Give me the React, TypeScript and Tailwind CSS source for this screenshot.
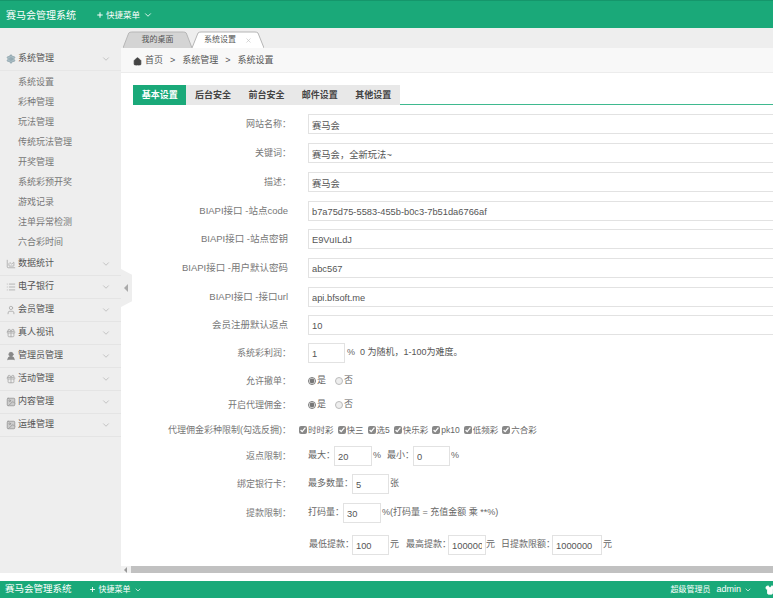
import { useState } from "react";
import { ChartArea, ChevronDown, Gift, Home, ImageIcon, List, Plus, Settings, Shirt, User, UserRound, X } from "lucide-react";

const SYSTEM_ITEMS = ["系统设置", "彩种管理", "玩法管理", "传统玩法管理", "开奖管理", "系统彩预开奖", "游戏记录", "注单异常检测", "六合彩时间"];

const MENU_GROUPS = [
  { label: "数据统计", icon: ChartArea, iconClass: "text-[#aaa]" },
  { label: "电子银行", icon: List, iconClass: "text-[#aaa]" },
  { label: "会员管理", icon: User, iconClass: "text-[#aaa]" },
  { label: "真人视讯", icon: Gift, iconClass: "text-[#aaa]" },
  { label: "管理员管理", icon: UserRound, iconClass: "fill-[#888] text-[#888]" },
  { label: "活动管理", icon: Gift, iconClass: "text-[#aaa]" },
  { label: "内容管理", icon: ImageIcon, iconClass: "fill-[#ccc] text-[#999]" },
  { label: "运维管理", icon: ImageIcon, iconClass: "fill-[#ccc] text-[#999]" },
];

const SUB_TABS = ["基本设置", "后台安全", "前台安全", "邮件设置", "其他设置"];
const LOTTERY_TYPES = ["时时彩", "快三", " 选5", "快乐彩", "pk10", "低频彩", "六合彩"];

function TextInput({ value, width }: { value: string; width: string }) {
  return (
    <input
      readOnly
      value={value}
      className={`h-[20px] shrink-0 border border-[#e2e2e2] bg-white px-[3px] pt-[1px] text-[9.3px] text-[#555] outline-none ${width}`}
    />
  );
}

// labels end 3px further right when they carry the full-width colon
function Row({ label, height, api, children }: { label: string; height: string; api?: boolean; children: React.ReactNode }) {
  return (
    <div className={`flex items-center ${height}`}>
      <label className={`shrink-0 text-right text-[#777] ${api ? "w-[155px] text-[9.5px]" : "w-[158px] pt-[2px] text-[9px]"}`}>{label}</label>
      <div className={`flex items-center whitespace-nowrap text-[9px] text-[#666] ${api ? "ml-[20px]" : "ml-[17px]"}`}>{children}</div>
    </div>
  );
}

function YesNo({ name }: { name: string }) {
  return (
    <div className="flex items-center">
      <input type="radio" name={name} readOnly checked className="h-[8px] w-[8px] accent-[#777]" />
      <span className="ml-[1px]">是</span>
      <span className="ml-[9px] h-[8px] w-[8px] rounded-full border border-[#bbb] bg-[#eee]" />
      <span className="ml-[1px]">否</span>
    </div>
  );
}

function PageTab({ label, active }: { label: string; active?: boolean }) {
  return (
    <div className={`relative flex h-[17px] items-center justify-center pt-[1px] text-[8px] text-[#555] ${active ? "w-[72px]" : "w-[69px]"}`}>
      <svg viewBox="0 0 72 17" preserveAspectRatio="none" className="absolute inset-0 h-full w-full">
        <path
          d="M0 17 L6 2 Q7 1 9 1 L63 1 Q65 1 66 2 L72 17"
          fill={active ? "#ffffff" : "#d4d4d4"}
          stroke="#b5b5b5"
          strokeWidth="1"
        />
      </svg>
      <span className="relative">{label}</span>
      {active && <X className="relative ml-[9px] h-[7px] w-[7px] text-[#bbb]" />}
    </div>
  );
}

export default function App() {
  const [subTab, setSubTab] = useState(0);

  return (
    <div className="flex h-[598px] w-[773px] flex-col overflow-hidden bg-white font-['Liberation_Sans','Noto_Sans_CJK_SC',sans-serif]">
      {/* Top bar */}
      <header className="flex h-[28px] shrink-0 items-center border-t border-[#15966b] bg-[#1aa979] pt-[1px] text-white">
        <span className="ml-[6px] text-[10px]">赛马会管理系统</span>
        <Plus className="ml-[20px] h-[8px] w-[8px]" strokeWidth={3} />
        <span className="ml-[2px] text-[8.5px]">快捷菜单</span>
        <ChevronDown className="ml-[3px] h-[10px] w-[10px]" />
      </header>

      <div className="relative flex h-[545px] shrink-0">
        {/* Sidebar */}
        <aside className="w-[121px] shrink-0 bg-[#eeeeee] pt-[20px]">
          <div className="flex h-[23px] items-center justify-between border-b border-[#e6e6e6] pl-[6px] pr-[10px] text-[9px] text-[#555]">
            <span className="flex items-center gap-[2px]">
              <Settings className="h-[10px] w-[10px] fill-[#a8bcc4] text-[#8aa0a8]" />
              系统管理
            </span>
            <ChevronDown className="h-[10px] w-[10px] text-[#bbb]" />
          </div>
          <ul className="pt-[2px]">
            {SYSTEM_ITEMS.map((item) => (
              <li key={item} className="flex h-[20px] items-center pl-[18px] text-[9px] text-[#777]">
                {item}
              </li>
            ))}
          </ul>
          <ul>
            {MENU_GROUPS.map(({ label, icon: Icon, iconClass }) => (
              <li key={label} className="flex h-[23px] items-center justify-between border-b border-[#e4e4e4] pl-[6px] pr-[10px] text-[9px] text-[#555]">
                <span className="flex items-center gap-[2px]">
                  <Icon className={`h-[10px] w-[10px] ${iconClass}`} />
                  {label}
                </span>
                <ChevronDown className="h-[10px] w-[10px] text-[#bbb]" />
              </li>
            ))}
          </ul>
        </aside>

        {/* Sidebar collapse handle */}
        <div className="absolute left-[121px] top-[241px] h-[38px] w-[11px] bg-[#eeeeee] [clip-path:polygon(0_0,100%_15%,100%_85%,0_100%)]">
          <div className="absolute left-[3px] top-[15px] h-0 w-0 border-y-[4px] border-r-[4px] border-y-transparent border-r-[#aaa]" />
        </div>

        <main className="flex min-w-0 flex-1 flex-col">
          <div className="flex h-[20px] shrink-0 items-end bg-[#eeeeee] pl-[2px]">
            <PageTab label="我的桌面" />
            <PageTab label="系统设置" active />
          </div>
          <div className="flex h-[25px] shrink-0 items-center gap-[6px] border-b border-[#ececec] bg-[#f8f8f8] pl-[12px] pt-[2px] text-[9px] text-[#555]">
            <Home className="-mr-[3px] h-[9px] w-[9px] fill-[#444] text-[#444]" />
            <span>首页</span>
            <span className="mx-[1px]">&gt;</span>
            <span>系统管理</span>
            <span className="mx-[1px]">&gt;</span>
            <span>系统设置</span>
          </div>

          <div className="min-h-0 flex-1 overflow-hidden pl-[12px] pt-[12px]">
            {/* Section tabs */}
            <div className="flex h-[20px] border-b border-[#3fb98f] text-[9px] font-bold">
              {SUB_TABS.map((tab, i) => (
                <button
                  key={tab}
                  onClick={() => setSubTab(i)}
                  className={`h-[20px] w-[53.4px] pt-[1px] ${subTab === i ? "bg-[#1aa979] text-white" : "bg-[#e8e8e8] text-[#444]"}`}
                >
                  {tab}
                </button>
              ))}
            </div>

            <form className="pt-[5px]">
              <Row label="网站名称：" height="h-[28px]"><TextInput value="赛马会" width="w-[480px]" /></Row>
              <Row label="关键词：" height="h-[30px]"><TextInput value="赛马会，全新玩法~" width="w-[480px]" /></Row>
              <Row label="描述：" height="h-[28px]"><TextInput value="赛马会" width="w-[480px]" /></Row>
              <Row api label="BIAPI接口 -站点code" height="h-[30px]"><TextInput value="b7a75d75-5583-455b-b0c3-7b51da6766af" width="w-[480px]" /></Row>
              <Row api label="BIAPI接口 -站点密钥" height="h-[26px]"><TextInput value="E9VuILdJ" width="w-[480px]" /></Row>
              <Row api label="BIAPI接口 -用户默认密码" height="h-[32px]"><TextInput value="abc567" width="w-[480px]" /></Row>
              <Row api label="BIAPI接口 -接口url" height="h-[26px]"><TextInput value="api.bfsoft.me" width="w-[480px]" /></Row>
              <Row api label="会员注册默认返点" height="h-[30px]"><TextInput value="10" width="w-[480px]" /></Row>
              <Row label="系统彩利润：" height="h-[26px]">
                <TextInput value="1" width="w-[37px]" />
                <span className="ml-[2px]">%</span>
                <span className="ml-[5px] text-[#555]">0 为随机，1-100为难度。</span>
              </Row>
              <Row label="允许撤单：" height="h-[30px]"><YesNo name="allowCancel" /></Row>
              <Row label="开启代理佣金：" height="h-[18px]"><YesNo name="agentCommission" /></Row>
              <Row label="代理佣金彩种限制(勾选反拥)：" height="h-[32px]">
                <div className="-ml-[9px] flex items-center gap-[4px] text-[8.5px]">
                  {LOTTERY_TYPES.map((name) => (
                    <span key={name} className="flex items-center">
                      <input type="checkbox" readOnly checked className="mr-[1px] h-[8px] w-[8px] accent-[#888]" />
                      {name}
                    </span>
                  ))}
                </div>
              </Row>
              <Row label="返点限制：" height="h-[20px]">
                <span>最大：</span>
                <TextInput value="20" width="-ml-[1px] w-[38px]" />
                <span className="ml-[1px] mr-[6px]">%</span>
                <span>最小：</span>
                <TextInput value="0" width="-ml-[1px] w-[37px]" />
                <span className="ml-[1px]">%</span>
              </Row>
              <Row label="绑定银行卡：" height="h-[36px]">
                <span>最多数量：</span>
                <TextInput value="5" width="-ml-[1px] w-[37px]" />
                <span className="ml-[1px]">张</span>
              </Row>
              <Row label="提款限制：" height="h-[22px]">
                <span>打码量：</span>
                <TextInput value="30" width="-ml-[1px] w-[38px]" />
                <span className="ml-[1px]">%(打码量 = 充值金额 乘 **%)</span>
              </Row>
              <div className="flex h-[42px] items-center whitespace-nowrap pl-[176px] text-[9px] text-[#666]">
                <span>最低提款：</span>
                <TextInput value="100" width="-ml-[2px] w-[37px]" />
                <span className="ml-[1px] mr-[7px]">元</span>
                <span>最高提款：</span>
                <TextInput value="1000000" width="-ml-[3px] w-[38px]" />
                <span className="mr-[6px]">元</span>
                <span>日提款限额：</span>
                <TextInput value="1000000" width="-ml-[3px] w-[50px]" />
                <span className="ml-[1px]">元</span>
              </div>
            </form>
          </div>

          {/* Horizontal scrollbar */}
          <div className="flex h-[7px] shrink-0 items-center bg-[#f1f1f1]">
            <div className="ml-[3px] h-0 w-0 border-y-[3px] border-r-[3px] border-y-transparent border-r-[#999]" />
            <div className="ml-[4px] h-full flex-1 bg-[#c1c1c1]" />
          </div>
        </main>
      </div>

      <div className="h-[8px] shrink-0 bg-white" />

      {/* Bottom bar */}
      <footer className="flex h-[17px] shrink-0 items-center bg-[#1aa979] text-white">
        <span className="ml-[5px] text-[9.5px]">赛马会管理系统</span>
        <Plus className="ml-[17px] h-[7px] w-[7px]" strokeWidth={3} />
        <span className="ml-[3px] text-[8px]">快捷菜单</span>
        <ChevronDown className="ml-[3px] h-[8px] w-[8px]" />
        <span className="ml-auto text-[8px]">超级管理员</span>
        <span className="ml-[6px] text-[9px]">admin</span>
        <ChevronDown className="ml-[3px] h-[8px] w-[8px]" />
        <Shirt className="ml-[13px] mr-[-2px] h-[10px] w-[10px] fill-white" />
      </footer>
    </div>
  );
}
